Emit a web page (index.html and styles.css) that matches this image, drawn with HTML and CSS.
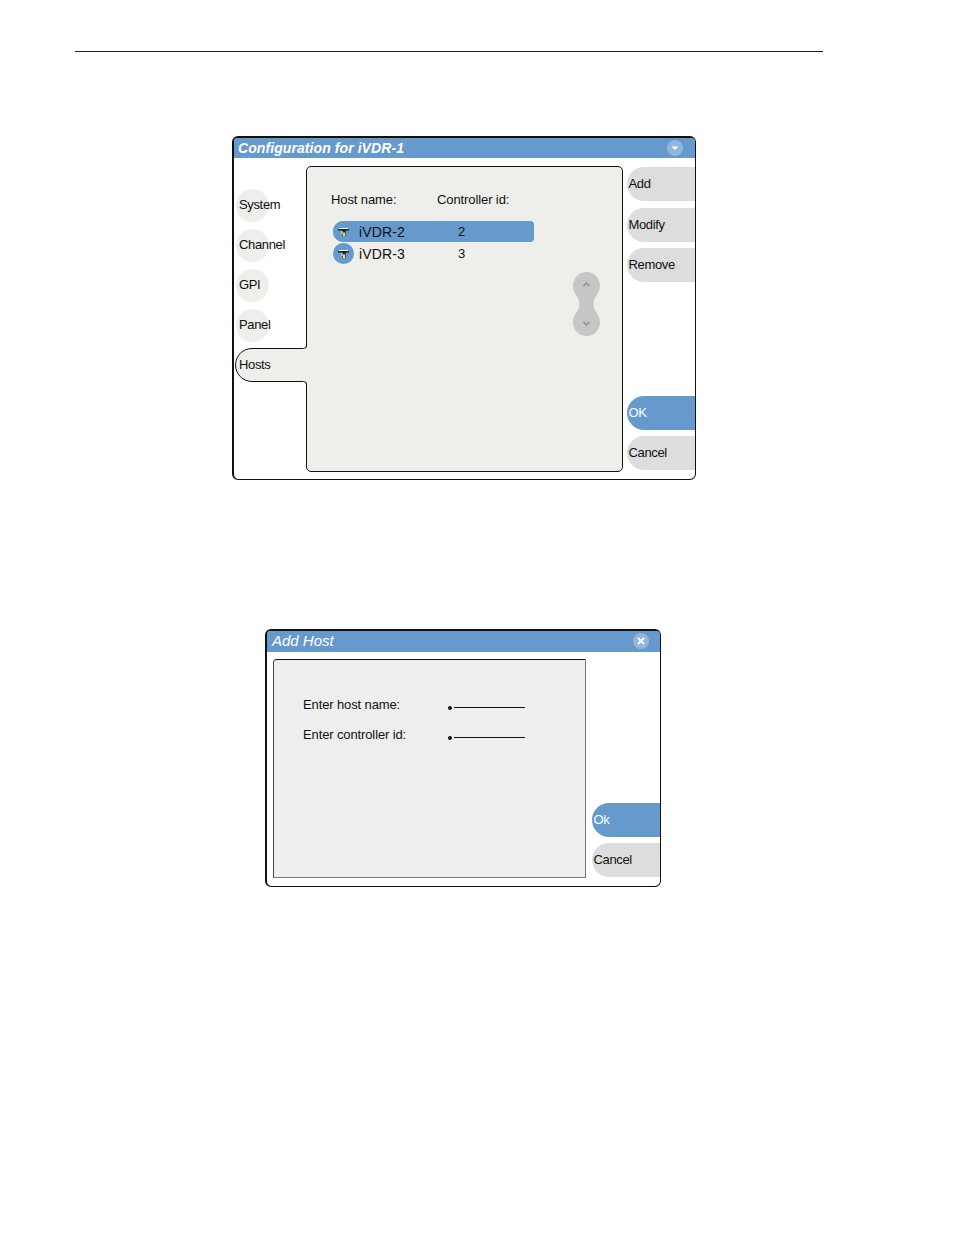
FILE: index.html
```html
<!DOCTYPE html>
<html lang="en">
<head>
  <meta charset="UTF-8">
  <title>Configuration for iVDR-1</title>
  <link rel="stylesheet" href="styles.css">
</head>
<body>
  <div class="page-rule"></div>

  <div class="dialog config-dialog">
    <div class="titlebar">
      <span class="title">Configuration for iVDR-1</span>
      <span class="title-btn">
        <svg width="16" height="16" viewBox="0 0 16 16"><path d="M4.500 6.500h7L8 10z" fill="#fff"/></svg>
      </span>
    </div>
    <div class="dialog-body">
      <div class="tabs">
        <div class="tab">System</div>
        <div class="tab">Channel</div>
        <div class="tab">GPI</div>
        <div class="tab">Panel</div>
        <div class="tab tab-active">
          <svg class="tab-shape" width="74" height="42" viewBox="0 0 74 42">
            <path d="M72 1Q72 4.500 68.500 4.500H17A16.500 16.500 0 0 0 17 37.500H68.500Q72 37.500 72 41H74V1Z" fill="#eeeeea"/>
            <path d="M71.500 0V1.500Q71.500 4.500 68.500 4.500H17A16.500 16.500 0 0 0 17 37.500H68.500Q71.500 37.500 71.500 40.500V42" fill="none" stroke="#111"/>
          </svg>
          <span class="tab-label">Hosts</span>
        </div>
      </div>

      <div class="panel">
        <div class="host-list">
          <div class="host-head">
            <span class="col-name">Host name:</span>
            <span>Controller id:</span>
          </div>
          <div class="host-row selected">
            <span class="host-icon">
              <svg width="21" height="21" viewBox="0 0 21 21">
                <path d="M6 7h9v1H6z" fill="#f4f4f0"/>
                <path d="M5 8h11v1.500h-2.500l-1 1V15h-3v-4.500l-1-1H5z" fill="#222"/>
                <path d="M8.500 10h1v3h-1z" fill="#f4f4f0"/>
                <path d="M10 11.500h2V15h-2z" fill="#f2e24a"/>
              </svg>
            </span>
            <span class="host-name">iVDR-2</span>
            <span class="host-id">2</span>
          </div>
          <div class="host-row">
            <span class="host-icon">
              <svg width="21" height="21" viewBox="0 0 21 21">
                <path d="M6 7h9v1H6z" fill="#f4f4f0"/>
                <path d="M5 8h11v1.500h-2.500l-1 1V15h-3v-4.500l-1-1H5z" fill="#222"/>
                <path d="M8.500 10h1v3h-1z" fill="#f4f4f0"/>
                <path d="M10 11.500h2V15h-2z" fill="#f2e24a"/>
              </svg>
            </span>
            <span class="host-name">iVDR-3</span>
            <span class="host-id">3</span>
          </div>
        </div>
        <svg class="scroller" width="27" height="64" viewBox="0 0 27 64">
          <path d="M13.500 0A13.500 13.500 0 0 1 27 13.500C27 22 20.500 25 20.500 32S27 42 27 50.500A13.500 13.500 0 0 1 0 50.500C0 42 6.500 39 6.500 32S0 22 0 13.500A13.500 13.500 0 0 1 13.500 0Z" fill="#c6c6c4"/>
          <path d="M10.500 14l3-3 3 3M10.500 50l3 3 3-3" fill="none" stroke="#8a8a88" stroke-width="1.300"/>
        </svg>
      </div>

      <div class="actions">
        <div class="action">Add</div>
        <div class="action">Modify</div>
        <div class="action">Remove</div>
        <div class="action primary push-down">OK</div>
        <div class="action">Cancel</div>
      </div>
    </div>
  </div>

  <div class="dialog host-dialog">
    <div class="titlebar">
      <span class="title title-light">Add Host</span>
      <span class="title-btn">
        <svg width="16" height="16" viewBox="0 0 16 16"><path d="M5 5l6 6M11 5l-6 6" stroke="#fff" stroke-width="1.800" fill="none"/></svg>
      </span>
    </div>
    <div class="dialog-body">
      <div class="form-panel">
        <div class="form-row">
          <span class="form-label">Enter host name:</span>
          <span class="form-field"></span>
        </div>
        <div class="form-row">
          <span class="form-label">Enter controller id:</span>
          <span class="form-field"></span>
        </div>
      </div>
      <div class="actions">
        <div class="action primary push-down">Ok</div>
        <div class="action">Cancel</div>
      </div>
    </div>
  </div>
</body>
</html>
```

FILE: styles.css
```css
body {
  margin: 0;
  background-color: #fff;
  color: #111;
  font-family: "Liberation Sans", Arial, sans-serif;
  font-size: 13px;
  line-height: 16px;
}
.page-rule {
  width: 748px;
  height: 1px;
  margin: 51px 0 0 75px;
  background-color: #222;
}
.dialog {
  box-sizing: border-box;
  display: flex;
  flex-direction: column;
  border-style: solid;
  border-color: #111;
  border-width: 2px 1px 1px 2px;
  border-radius: 6px;
}
.config-dialog {
  width: 464px;
  height: 344px;
  margin: 84px 0 0 232px;
}
.host-dialog {
  width: 396px;
  height: 258px;
  margin: 149px 0 0 265px;
}
.titlebar {
  display: flex;
  align-items: center;
  justify-content: space-between;
  height: 20px;
  padding: 0 12px 0 4px;
  background-color: #6699cc;
  border-radius: 3px 3px 0 0;
  flex-shrink: 0;
}
.host-dialog .titlebar {
  box-sizing: border-box;
  height: 21px;
  padding: 0 11px 1px 5px;
}
.title {
  color: #fff;
  font-size: 14px;
  font-weight: bold;
  font-style: italic;
  letter-spacing: 0.08px;
}
.title-light {
  font-weight: normal;
  font-size: 15px;
  letter-spacing: 0;
}
.title-btn {
  width: 16px;
  height: 16px;
  border-radius: 50%;
  background-color: #93b6de;
}
.title-btn svg {
  display: block;
}
.dialog-body {
  display: flex;
  flex: 1;
  min-height: 0;
}
.tabs {
  display: flex;
  flex-direction: column;
  gap: 7px;
  box-sizing: border-box;
  width: 72px;
  padding: 31px 0 0 2px;
}
.tab {
  box-sizing: border-box;
  width: 33px;
  height: 33px;
  padding-left: 3px;
  border-radius: 50%;
  background-color: #eeeeea;
  line-height: 31px;
  letter-spacing: -0.35px;
  white-space: nowrap;
}
.tab-active {
  position: relative;
  z-index: 1;
  background: none;
}
.tab-shape {
  position: absolute;
  left: -1px;
  top: -5px;
}
.tab-label {
  position: relative;
}
.panel {
  display: flex;
  box-sizing: border-box;
  width: 317px;
  height: 306px;
  margin-top: 8px;
  border: 1px solid #111;
  border-radius: 5px;
  background-color: #eeeeea;
}
.host-list {
  width: 266px;
  padding: 25px 0 0 24px;
  box-sizing: border-box;
}
.host-head {
  display: flex;
  margin-bottom: 13px;
  letter-spacing: -0.1px;
}
.col-name {
  width: 106px;
}
.host-row {
  display: flex;
  align-items: center;
  width: 201px;
  height: 21px;
  margin: 0 0 1px 2px;
  border-radius: 11px 4px 4px 11px;
}
.host-row.selected {
  background-color: #6699cc;
}
.host-icon {
  width: 21px;
  height: 21px;
  margin-right: 5px;
  border-radius: 50%;
  background-color: #6699cc;
}
.host-icon svg {
  display: block;
}
.host-name {
  width: 99px;
  font-size: 14px;
  letter-spacing: 0.15px;
}
.scroller {
  margin-top: 105px;
}
.actions {
  display: flex;
  flex-direction: column;
  gap: 6.5px;
  width: 68px;
  margin: 9px 0 9px 4px;
}
.action {
  height: 34px;
  padding-left: 1.5px;
  box-sizing: border-box;
  border-radius: 17px 0 0 17px;
  background-color: #dddddd;
  line-height: 34px;
  letter-spacing: -0.35px;
}
.primary {
  background-color: #6699cc;
  color: #fff;
}
.push-down {
  margin-top: auto;
}
.form-panel {
  box-sizing: border-box;
  width: 313px;
  height: 219px;
  margin: 7px 0 0 6px;
  padding: 37px 0 0 29px;
  border: 1px solid #777;
  border-top-color: #111;
  border-left-color: #444;
  border-top-left-radius: 4px;
  background-color: #eeeeee;
}
.form-row {
  display: flex;
  margin-bottom: 14px;
  letter-spacing: -0.12px;
}
.form-label {
  width: 147px;
}
.form-field {
  position: relative;
  width: 71px;
  height: 1px;
  margin: 10px 0 0 4px;
  background-color: #111;
}
.form-field::before {
  content: "";
  position: absolute;
  left: -6px;
  top: -1px;
  width: 4px;
  height: 4px;
  border-radius: 50%;
  background-color: #111;
}
.host-dialog .actions {
  width: 68px;
  margin: 0 0 9px 6px;
}
```
